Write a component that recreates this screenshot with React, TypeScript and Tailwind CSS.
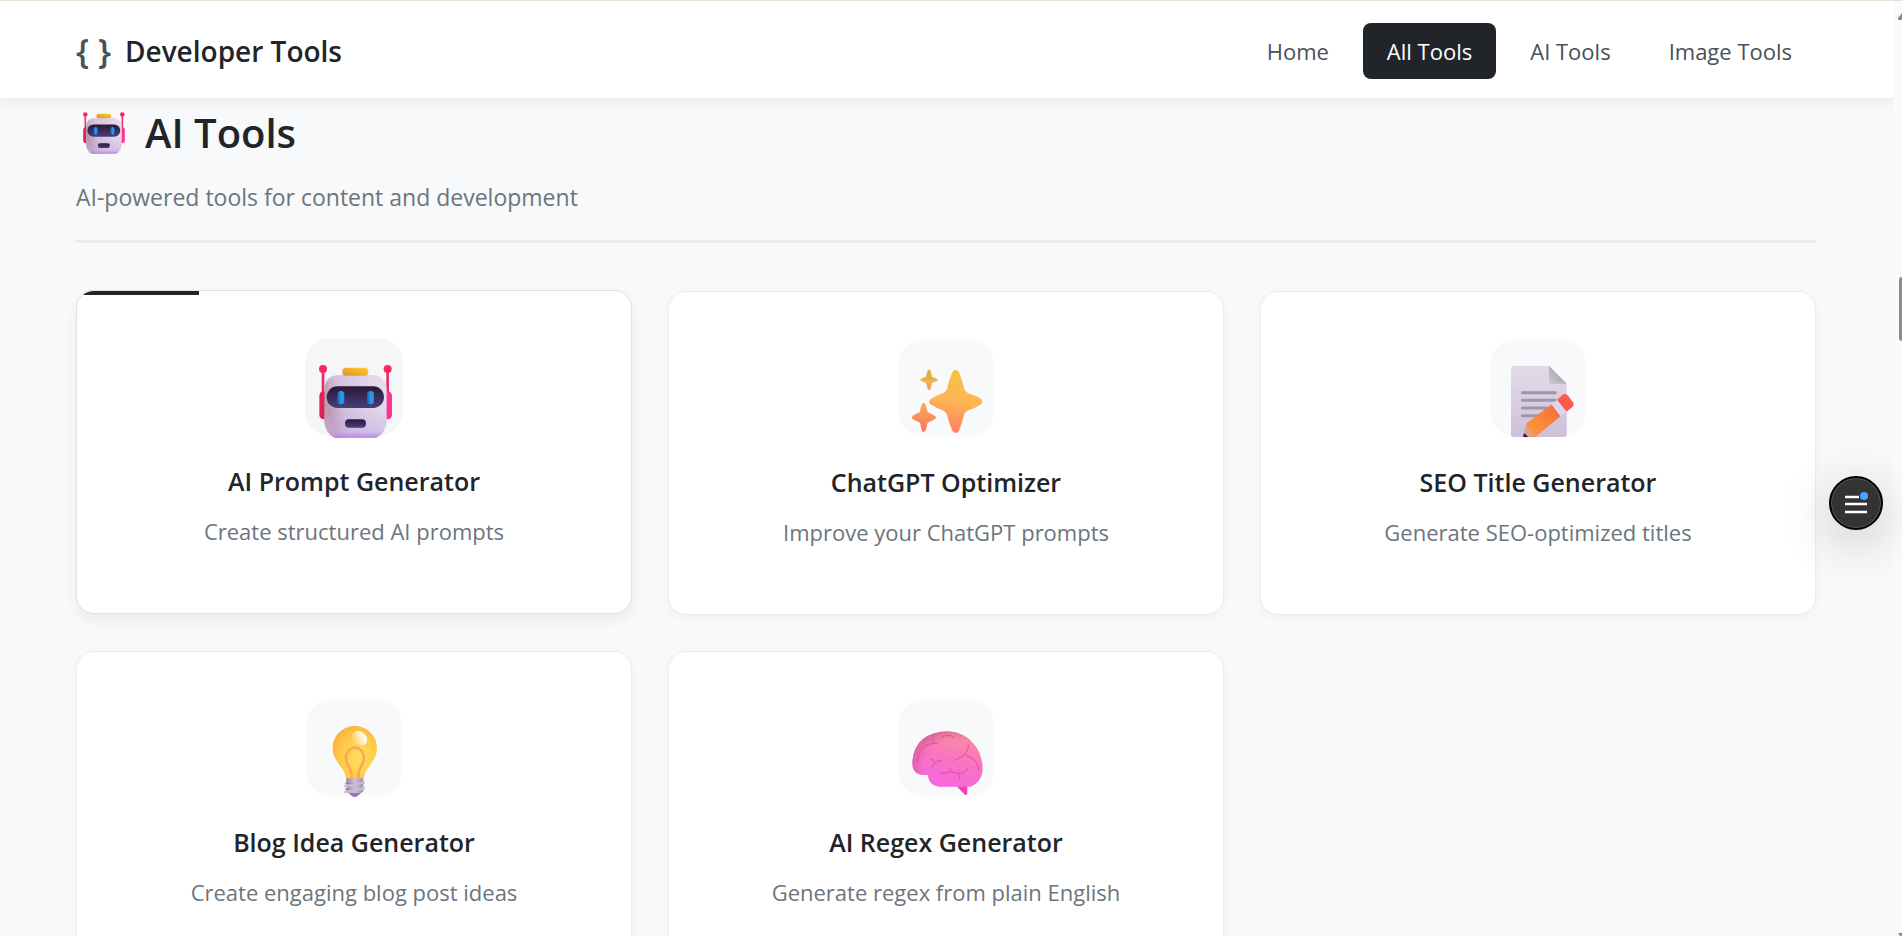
import type { ReactNode } from "react";

const navLinks = [
  { label: "Home", active: false },
  { label: "All Tools", active: true },
  { label: "AI Tools", active: false },
  { label: "Image Tools", active: false },
];

function Robot({ id }: { id: string }) {
  return (
    <>
      <defs>
        <linearGradient id={`${id}-face`} x1="0" x2="1" y1="0.3" y2="0">
          <stop offset="0" stopColor="#bd9bb0" />
          <stop offset="0.22" stopColor="#d3c0e0" />
          <stop offset="0.6" stopColor="#ddd0e8" />
          <stop offset="1" stopColor="#e6deec" />
        </linearGradient>
        <linearGradient id={`${id}-chin`} x1="0" x2="0" y1="0" y2="1">
          <stop offset="0.55" stopColor="#c9b0e6" stopOpacity="0" />
          <stop offset="0.9" stopColor="#c9b0e6" stopOpacity="0.5" />
          <stop offset="1" stopColor="#b583e2" />
        </linearGradient>
        <linearGradient id={`${id}-visor`} x1="0" x2="0" y1="0" y2="1">
          <stop offset="0" stopColor="#2b1636" />
          <stop offset="1" stopColor="#483f7a" />
        </linearGradient>
        <linearGradient id={`${id}-eye`} x1="0" x2="1" y1="0" y2="0">
          <stop offset="0" stopColor="#1465b0" />
          <stop offset="0.6" stopColor="#2d9cec" />
          <stop offset="1" stopColor="#2688d8" />
        </linearGradient>
        <linearGradient id={`${id}-cap`} x1="0" x2="1" y1="1" y2="0">
          <stop offset="0" stopColor="#dd8f2e" />
          <stop offset="1" stopColor="#ffd12b" />
        </linearGradient>
      </defs>
      <rect x="95" y="135" width="8" height="72" fill="#ee2a68" />
      <rect x="289" y="135" width="8" height="72" fill="#ee2a68" />
      <circle cx="99" cy="132" r="12" fill="#fb2860" />
      <circle cx="293" cy="132" r="12" fill="#fb2860" />
      <rect x="88" y="199" width="36" height="84" rx="13" fill="#df2357" />
      <rect x="270" y="199" width="36" height="84" rx="13" fill="#ff3192" />
      <path
        d="M103 197Q103 150 150 150H243Q290 150 290 197V292Q286 326 259 338H134Q107 326 103 292Z"
        fill={`url(#${id}-face)`}
      />
      <path
        d="M103 197Q103 150 150 150H243Q290 150 290 197V292Q286 326 259 338H134Q107 326 103 292Z"
        fill={`url(#${id}-chin)`}
      />
      <rect x="157" y="128" width="78" height="24" rx="11" fill={`url(#${id}-cap)`} />
      <rect x="110" y="184" width="172" height="65" rx="32" fill={`url(#${id}-visor)`} />
      <rect x="142" y="198" width="21" height="40" rx="10" fill={`url(#${id}-eye)`} />
      <rect x="231" y="198" width="21" height="40" rx="10" fill={`url(#${id}-eye)`} />
      <rect x="165" y="283" width="63" height="25" rx="12" fill={`url(#${id}-visor)`} />
    </>
  );
}

function Sparkles() {
  return (
    <>
      <defs>
        <linearGradient id="sparkle" x1="0.6" x2="0.45" y1="0" y2="1">
          <stop offset="0" stopColor="#f6c044" />
          <stop offset="0.5" stopColor="#ffb553" />
          <stop offset="1" stopColor="#ff7d62" />
        </linearGradient>
        <linearGradient id="sparkle-top" x1="0" x2="0" y1="0" y2="1">
          <stop offset="0" stopColor="#dfa443" />
          <stop offset="0.6" stopColor="#efb34f" />
          <stop offset="1" stopColor="#fb8f61" />
        </linearGradient>
        <linearGradient id="sparkle-low" x1="0" x2="0" y1="0" y2="1">
          <stop offset="0" stopColor="#f5b04c" />
          <stop offset="1" stopColor="#ff6f68" />
        </linearGradient>
      </defs>
      <path
        d="M201 127Q211 113 221 127Q231 150 237 178Q240 185 247 189Q270 196 286 206Q296 215 286 224Q268 235 246 242Q239 246 236 254Q230 281 221 302Q211 316 201 302Q191 278 185 254Q182 246 175 242Q154 234 137 224Q126 215 137 206Q156 195 175 189Q182 185 185 178Q191 148 201 127Z"
        fill="url(#sparkle)"
      />
      <path
        d="M127 121Q131 117 135 121L140 140L155 146Q160 150 155 153L140 158L136 177Q131 183 127 177L122 158L107 153Q103 150 107 146L122 140Z"
        fill="url(#sparkle-top)"
      />
      <path
        d="M110 222Q115 216 120 222Q124 233 127 246Q138 251 149 258Q155 262 149 267Q138 273 127 278Q124 291 120 302Q115 309 110 302Q106 290 104 278Q92 273 82 267Q76 262 82 258Q92 251 104 246Q106 232 110 222Z"
        fill="url(#sparkle-low)"
      />
    </>
  );
}

function Memo() {
  return (
    <>
      <defs>
        <linearGradient id="sheet" x1="0" x2="0" y1="0" y2="1">
          <stop offset="0" stopColor="#e3dbe9" />
          <stop offset="1" stopColor="#cdc0d8" />
        </linearGradient>
        <linearGradient id="fold" x1="0" x2="1" y1="1" y2="0">
          <stop offset="0" stopColor="#cfc8d4" />
          <stop offset="0.6" stopColor="#aea6b4" />
        </linearGradient>
        <linearGradient id="pencil" x1="0" x2="1" y1="1" y2="0">
          <stop offset="0" stopColor="#ff9a3e" />
          <stop offset="0.5" stopColor="#fb8438" />
          <stop offset="1" stopColor="#f06a40" />
        </linearGradient>
        <clipPath id="sheet-cut">
          <rect x="80" y="100" width="220" height="221" />
        </clipPath>
      </defs>
      <path d="M99 108H207L260 161V315Q260 321 254 321H99Q93 321 93 315V114Q93 108 99 108Z" fill="url(#sheet)" />
      <path d="M207 108L260 161H213Q207 161 207 155Z" fill="url(#fold)" />
      <path d="M127 188H226M127 211H226M127 234H200M127 257H180" stroke="#9e97a6" strokeWidth="9" strokeLinecap="round" />
      <g clipPath="url(#sheet-cut)">
        <path d="M138 281L166 321L128 334Z" fill="#dba18e" />
        <path d="M132 309L145 321L126 334Z" fill="#3a1145" />
        <path d="M138 281L216 222L243 257L166 321Q150 303 138 281Z" fill="url(#pencil)" />
        <path d="M214 223L231 209L260 245L241 259Z" fill="#ded5ee" />
        <path d="M231 209L248 194Q256 189 263 196L279 217Q284 225 277 231L260 245Z" fill="#fb5a4e" />
      </g>
    </>
  );
}

function Bulb() {
  return (
    <>
      <defs>
        <radialGradient id="glass" cx="0.6" cy="0.6" r="0.65">
          <stop offset="0" stopColor="#ffe05c" />
          <stop offset="0.6" stopColor="#ffcb4b" />
          <stop offset="1" stopColor="#fbb33c" />
        </radialGradient>
        <linearGradient id="shine" x1="0.7" x2="0.2" y1="0.2" y2="0.9">
          <stop offset="0" stopColor="#fff" stopOpacity="0.95" />
          <stop offset="1" stopColor="#fff" stopOpacity="0.15" />
        </linearGradient>
        <linearGradient id="screw" x1="0" x2="1" y1="0" y2="0">
          <stop offset="0" stopColor="#9a86a5" />
          <stop offset="0.5" stopColor="#cfc0d4" />
          <stop offset="1" stopColor="#a18cb4" />
        </linearGradient>
      </defs>
      <path
        d="M194 108C231 108 261 138 261 174C261 206 238 224 227 245Q222 255 220 269H169Q167 255 162 245C151 224 128 206 128 174C128 138 158 108 194 108Z"
        fill="url(#glass)"
      />
      <path
        d="M186 266Q186 246 174 225Q162 204 173 186Q183 172 195 173Q208 173 217 186Q227 205 215 225Q204 245 204 266"
        fill="none"
        stroke="#fcaa50"
        strokeWidth="8"
      />
      <ellipse cx="209" cy="144" rx="25" ry="19" transform="rotate(40 209 144)" fill="url(#shine)" />
      <path d="M169 265H220V304L209 313H179L169 304Z" fill="url(#screw)" />
      <path d="M176 309H212L202 319Q194 323 186 319Z" fill="#9771c3" />
      <path d="M166 279Q194 288 221 279M166 297Q194 307 221 297" fill="none" stroke="#8f7ca3" strokeWidth="3" strokeLinecap="round" />
      <path d="M165 288Q194 286 222 277M165 306Q194 303 222 295" fill="none" stroke="#cbbcd1" strokeWidth="7" strokeLinecap="round" />
    </>
  );
}

function Brain() {
  return (
    <>
      <defs>
        <linearGradient id="brain" x1="0.25" x2="0.6" y1="1" y2="0">
          <stop offset="0" stopColor="#f765e4" />
          <stop offset="0.5" stopColor="#f872c4" />
          <stop offset="1" stopColor="#fb8f9e" />
        </linearGradient>
        <radialGradient id="brain-edge" cx="0.62" cy="0.62" r="0.66">
          <stop offset="0.7" stopColor="#d05a9c" stopOpacity="0" />
          <stop offset="1" stopColor="#c95791" stopOpacity="0.7" />
        </radialGradient>
      </defs>
      <path d="M213 288H246V311Q243 317 237 313Q226 301 213 288Z" fill="#ee43b9" />
      <path
        d="M81 216Q84 170 113 147Q145 123 190 124Q240 128 266 163Q281 180 286 200Q294 222 291 247Q286 278 256 290H160Q139 287 131 270L127 254Q112 257 99 252Q80 243 81 216Z"
        fill="url(#brain)"
      />
      <path
        d="M81 216Q84 170 113 147Q145 123 190 124Q240 128 266 163Q281 180 286 200Q294 222 291 247Q286 278 256 290H160Q139 287 131 270L127 254Q112 257 99 252Q80 243 81 216Z"
        fill="url(#brain-edge)"
      />
      <g fill="none" stroke="#e0509a" strokeWidth="3" strokeLinecap="round">
        <path d="M97 217Q98 181 120 167Q134 160 158 159M145 158Q147 151 142 147" />
        <path d="M167 142Q188 130 207 142" />
        <path d="M206 212Q231 202 240 190Q249 178 250 165M240 195Q257 200 267 209Q281 224 281 242" />
        <path d="M134 206Q145 210 148 218Q142 224 140 233M148 218Q156 210 169 212" />
        <path d="M166 250Q184 252 195 244Q213 253 234 248Q247 243 248 234M194 235L196 244M219 250Q224 258 223 268" />
      </g>
    </>
  );
}

type Tool = {
  title: string;
  description: string;
  viewBox: string;
  art: ReactNode;
  hovered?: boolean;
};

const tools: Tool[] = [
  {
    title: "AI Prompt Generator",
    description: "Create structured AI prompts",
    viewBox: "45 39 294 294",
    art: <Robot id="card-robot" />,
    hovered: true,
  },
  {
    title: "ChatGPT Optimizer",
    description: "Improve your ChatGPT prompts",
    viewBox: "38 30 288 288",
    art: <Sparkles />,
  },
  {
    title: "SEO Title Generator",
    description: "Generate SEO-optimized titles",
    viewBox: "30 30 288 288",
    art: <Memo />,
  },
  {
    title: "Blog Idea Generator",
    description: "Create engaging blog post ideas",
    viewBox: "48 30 288 288",
    art: <Bulb />,
  },
  {
    title: "AI Regex Generator",
    description: "Generate regex from plain English",
    viewBox: "38 30 288 288",
    art: <Brain />,
  },
];

function ToolCard({ title, description, viewBox, art, hovered }: Tool) {
  return (
    <a
      href="#"
      className={`relative flex flex-col items-center overflow-hidden rounded-[18px] border bg-white px-6 pt-12 pb-16 text-center ${
        hovered
          ? "-translate-y-px border-[#dee2e6] shadow-[0_6px_14px_rgba(0,0,0,0.06)]"
          : "border-[#e9ecef] shadow-[0_3px_8px_rgba(0,0,0,0.04)]"
      }`}
    >
      {hovered && <span className="absolute top-0 left-0 h-1 w-[22%] bg-[#212529]" />}
      <span className={`size-24 rounded-3xl ${hovered ? "scale-102 bg-[#f4f6f8]" : "bg-[#f8f9fb]"}`}>
        <svg viewBox={viewBox} className="size-full overflow-visible" aria-hidden="true">
          {art}
        </svg>
      </span>
      <h3 className="mt-7 text-[25px] leading-9 font-semibold text-[#212529]">{title}</h3>
      <p className="mt-3.5 text-[22px] leading-9 text-[#6c757d]">{description}</p>
    </a>
  );
}

export default function App() {
  return (
    <div className="flex h-screen overflow-hidden bg-[#f8f9fb] font-['Open_Sans','Noto_Sans',sans-serif]">
      <div className="min-w-0 flex-1">
        {/* HEADER */}
        <header className="relative z-10 border-t border-[#dce6d0] bg-white shadow-[0_3px_15px_rgba(0,0,0,0.08)]">
          <div className="flex h-[97px] items-center justify-between pt-0.5 pr-[78px] pl-[76px]">
            <a href="#" className="flex items-center gap-3.5 text-[28px] font-semibold text-[#212529]">
              <span className="text-[34px] leading-9 text-[#495057]">{"{ }"}</span>
              Developer Tools
            </a>
            <nav className="flex items-center gap-2.5">
              {navLinks.map(({ label, active }) => (
                <a
                  key={label}
                  href="#"
                  className={`rounded-lg px-6 py-3 text-[22px] leading-8 ${
                    active ? "bg-[#212529] font-medium text-white" : "text-[#495057]"
                  }`}
                >
                  {label}
                </a>
              ))}
            </nav>
          </div>
        </header>

        {/* AI TOOLS */}
        <main className="pt-[7px] pr-[78px] pl-[76px]">
          <div className="border-b-3 border-[#e9ecef] pb-[25px]">
            <h2 className="flex items-center gap-5 text-[40px] leading-14 font-semibold text-[#212529]">
              <svg viewBox="87 119 220 220" className="ml-[7px] size-[42px]" aria-hidden="true">
                <Robot id="title-robot" />
              </svg>
              AI Tools
            </h2>
            <p className="mt-[18px] text-[23px] leading-9 text-[#6c757d]">
              AI-powered tools for content and development
            </p>
          </div>

          <div className="mt-12 grid grid-cols-3 gap-9">
            {tools.map((tool) => (
              <ToolCard key={tool.title} {...tool} />
            ))}
          </div>
        </main>
      </div>

      {/* SCROLL TRACK */}
      <div className="relative z-20 flex w-2 flex-col items-end justify-between overflow-hidden border-t border-[#dce6d0] bg-[#fbfbfb] pt-3">
        <svg viewBox="0 0 4 7" className="h-[7px] w-1" aria-hidden="true">
          <path d="M4 0L0 5V7H4Z" fill="#8b8b8b" />
        </svg>
        <span className="absolute top-[276px] right-0 h-16 w-[3px] rounded-l-full bg-[#8b8b8b]" />
        <svg viewBox="0 0 4 3" className="h-[3px] w-1" aria-hidden="true">
          <path d="M0 0H4V3H2Z" fill="#8b8b8b" />
        </svg>
      </div>

      <button
        type="button"
        aria-label="Open menu"
        className="fixed top-1/2 right-[19px] z-30 mt-2 flex size-[54px] items-center justify-center rounded-full border-2 border-black bg-[#333] shadow-[inset_0_0_0_1px_#5a5a5a,0_12px_50px_rgba(0,0,0,0.22)]"
      >
        <svg viewBox="0 0 24 24" className="size-6" aria-hidden="true">
          <path d="M1 6H15M1 13H23M1 21H23" stroke="#fff" strokeWidth="2.4" />
          <circle cx="20" cy="5" r="4" fill="#4da3ff" />
        </svg>
      </button>
    </div>
  );
}
